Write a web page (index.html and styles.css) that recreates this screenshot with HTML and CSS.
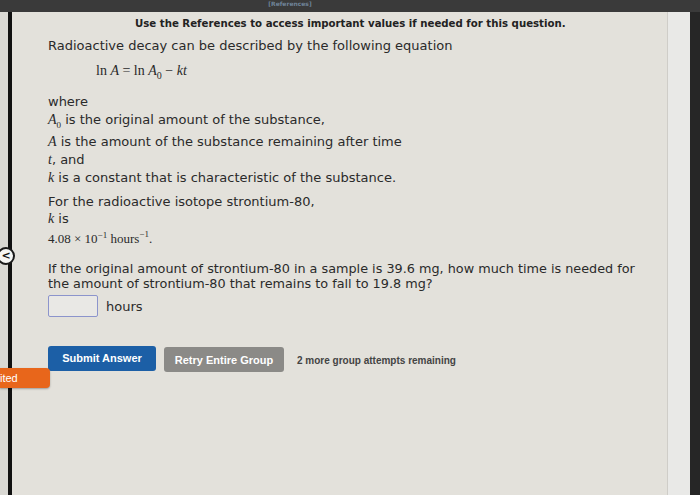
FILE: index.html
```html
<!DOCTYPE html>
<html>
<head>
<meta charset="utf-8">
<link rel="stylesheet" href="styles.css">
</head>
<body>
<div class="screen">
  <div class="topbar"><span class="reflabel">[References]</span></div>
  <div class="row">
    <div class="gutter">
      <div class="strip"></div>
      <div class="vline"></div>
      <div class="back">&lt;</div>
      <div class="tab">ited</div>
    </div>
    <div class="panel">
      <p class="refnote">Use the References to access important values if needed for this question.</p>
      <p class="intro">Radioactive decay can be described by the following equation</p>
      <p class="eq"><span class="m">ln</span>&nbsp;<i class="m">A</i> = <span class="m">ln</span>&nbsp;<i class="m">A</i><sub class="m">0</sub> − <i class="m">kt</i></p>
      <div class="defs">
        <div>where</div>
        <div><i class="mv">A</i><sub class="s0">0</sub> is the original amount of the substance,</div>
        <div><i class="mv">A</i> is the amount of the substance remaining after time</div>
        <div><i class="mv">t</i>, and</div>
        <div><i class="mv">k</i> is a constant that is characteristic of the substance.</div>
      </div>
      <div class="given">
        <div>For the radioactive isotope strontium-80,</div>
        <div><i class="mv">k</i> is</div>
        <div class="val">4.08 × 10<sup>−1</sup> hours<sup class="hi">−1</sup>.</div>
      </div>
      <p class="question">If the original amount of strontium-80 in a sample is 39.6 mg, how much time is needed for the amount of strontium-80 that remains to fall to 19.8 mg?</p>
      <div class="answer"><span class="box"></span><span>hours</span></div>
      <div class="actions">
        <span class="btn submit">Submit Answer</span>
        <span class="btn retry">Retry Entire Group</span>
        <span class="remain">2 more group attempts remaining</span>
      </div>
    </div>
    <div class="rstrip"></div>
    <div class="redge"></div>
  </div>
</div>
</body>
</html>
```
FILE: styles.css
```css
html, body { margin: 0; padding: 0; }
body { width: 700px; height: 495px; overflow: hidden; background: #2b2b2b; font-family: "DejaVu Sans", sans-serif; color: #2a2a2a; }
.screen { display: flex; flex-direction: column; height: 495px; }
.topbar { height: 12px; background: #3a3a3a; display: flex; justify-content: center; align-items: flex-start; padding-right: 120px; }
.reflabel { font-size: 6px; line-height: 7px; color: #6f8398; font-weight: bold; }
.row { flex: 1; display: flex; }
.gutter { width: 12px; position: relative; display: flex; }
.strip { width: 8px; background: #d9d8d3; }
.vline { width: 4px; background: #111; }
.back { position: absolute; left: -3px; top: 235px; width: 14px; height: 14px; border-radius: 50%; background: #f6f6f4; border: 2px solid #1a1a1a; font: bold 11px/14px "DejaVu Sans", sans-serif; text-align: center; color: #111; }
.tab { position: absolute; left: 0; top: 356px; width: 50px; height: 20px; background: #e8661b; border-radius: 0 4px 4px 0; box-shadow: 0 1px 2px rgba(0,0,0,.3); font: 11px/20px "Liberation Sans", sans-serif; color: #fff; z-index: 2; }
.panel { flex: 1; background: #e3e1db; padding: 6px 0 0 36px; }
.rstrip { width: 22px; background: #e9e9e7; border-left: 1px solid #cfcdc8; }
.redge { width: 10px; background: #262626; }
p { margin: 0; }
.refnote { font-weight: bold; font-size: 10.2px; margin-left: 87px; color: #222; }
.intro { font-size: 13px; margin-top: 9px; }
.eq { font-family: "Liberation Serif", serif; font-size: 14px; margin: 10px 0 0 48px; }
.eq sub { font-size: 10px; }
.defs { font-size: 13px; line-height: 18px; margin-top: 12px; }
.mv { font-family: "Liberation Serif", serif; font-size: 14px; }
.s0 { font-family: "Liberation Serif", serif; font-size: 9px; }
.given { font-size: 13px; line-height: 17px; margin-top: 6px; }
.val { font-family: "Liberation Serif", serif; font-size: 13px; margin-top: -1px; }
.val sup { font-size: 9px; }
.val .hi { vertical-align: 6px; }
.question { font-size: 12.8px; line-height: 15px; margin-top: 14px; width: 600px; }
.answer { display: flex; align-items: center; gap: 8px; margin-top: 4px; font-size: 13px; }
.box { width: 48px; height: 20px; border: 1.5px solid #8c94cc; background: #e9e8e5; border-radius: 2px; }
.actions { display: flex; align-items: center; margin-top: 27px; gap: 8px; }
.btn { font-family: "Liberation Sans", sans-serif; font-weight: bold; font-size: 11px; color: #fff; border-radius: 3px; display: inline-flex; align-items: center; justify-content: center; height: 25px; }
.submit { width: 108px; background: #1c5fa6; }
.retry { width: 120px; background: #8b8a87; margin-top: 3px; }
.remain { font-family: "Liberation Sans", sans-serif; font-weight: bold; font-size: 10px; color: #444; margin-left: 5px; margin-top: 4px; }
```
